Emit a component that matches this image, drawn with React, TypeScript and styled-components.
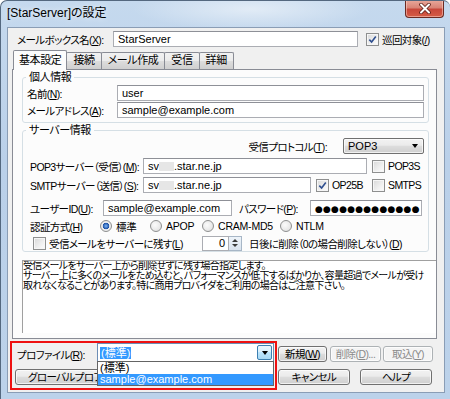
import React from 'react';
import styled, { createGlobalStyle } from 'styled-components';

const GlobalStyle = createGlobalStyle`
  html, body { margin: 0; padding: 0; background: #ffffff; }
  body {
    font-family: "Liberation Sans", "Noto Sans CJK JP", sans-serif;
    font-size: 10.5px;
    letter-spacing: -0.6px;
    font-feature-settings: "palt";
    color: #000;
  }
  *, *::before, *::after { box-sizing: border-box; }
`;

const Window = styled.div`
  width: 450px;
  height: 399px;
  display: flex;
  flex-direction: column;
  border-top: 1px solid #54687f;
  border-left: 1px solid #54687f;
  border-radius: 7px 7px 0 0;
  overflow: hidden;
  background:
    radial-gradient(ellipse 170px 30px at 250px 8px, rgba(255,255,255,0.5), rgba(255,255,255,0) 70%),
    linear-gradient(180deg, #c5d9ee 0%, #bad0e9 40%, #bcd2ea 100%);
`;

const TitleBar = styled.div`
  height: 26px;
  flex: none;
  display: flex;
  align-items: flex-start;
  justify-content: space-between;
  padding-left: 6px;
`;

const Title = styled.div`
  font-size: 12px;
  letter-spacing: 0;
  line-height: 24px;
  color: #000;
  text-shadow: 0 0 6px rgba(255,255,255,0.9);
`;

const CloseButton = styled.div`
  width: 39px;
  height: 18px;
  margin: -1px 6px 0 0;
  border: 1px solid #6b2a22;
  border-top: none;
  border-radius: 0 0 4px 4px;
  background: linear-gradient(180deg, #e9a99c 0%, #d98476 45%, #c8473a 55%, #d55c45 100%);
  box-shadow: inset 0 0 0 1px rgba(255,220,210,0.5);
  display: flex;
  align-items: center;
  justify-content: center;
`;

const Client = styled.div`
  flex: 1;
  margin: 0 5px 6px 6px;
  border: 1px solid #8a9db5;
  background: #f0f0f0;
  position: relative;
  display: flex;
  flex-direction: column;
`;

const Row = styled.div<{ $mt?: number; $pl?: number; $end?: boolean }>`
  display: flex;
  align-items: center;
  height: 16px;
  flex: none;
  margin-top: ${p => p.$mt ?? 0}px;
  padding-left: ${p => p.$pl ?? 0}px;
  justify-content: ${p => (p.$end ? 'flex-end' : 'flex-start')};
  white-space: nowrap;
`;

const Label = styled.span<{ $w?: number; $ml?: number }>`
  flex: none;
  width: ${p => (p.$w ? `${p.$w}px` : 'auto')};
  margin-left: ${p => p.$ml ?? 0}px;
  white-space: nowrap;
`;

const TextBox = styled.div<{ $w?: number }>`
  ${p => (p.$w ? `width: ${p.$w}px; flex: none;` : 'flex: 1;')}
  height: 16px;
  border: 1px solid #abadb3;
  border-top-color: #8e9097;
  background: #fff;
  padding: 0 4px;
  font-size: 11px;
  letter-spacing: 0;
  line-height: 14px;
  overflow: hidden;
  white-space: nowrap;
`;

const Masked = styled.span`
  display: inline-block;
  width: 15px;
  height: 9px;
  vertical-align: -1px;
  background: #e6e6e6;
  filter: blur(0.6px);
`;

const Dots = styled.span`
  font-family: "DejaVu Sans", sans-serif;
  font-size: 9px;
  letter-spacing: 0.2px;
`;

const CheckLabel = styled.span<{ $ml?: number; $w?: number }>`
  display: inline-flex;
  align-items: center;
  gap: 3px;
  flex: none;
  margin-left: ${p => p.$ml ?? 0}px;
  width: ${p => (p.$w ? `${p.$w}px` : 'auto')};
  white-space: nowrap;
`;

const Box = styled.span`
  width: 13px;
  height: 13px;
  flex: none;
  border: 1px solid #8e8f8f;
  background: linear-gradient(135deg, #d8d8d8 0%, #f0f0f0 60%, #fdfdfd 100%);
  box-shadow: inset 0 0 0 1px #f6f6f6;
  display: flex;
  align-items: center;
  justify-content: center;
`;

const RadioItem = styled.span<{ $w?: number }>`
  display: inline-flex;
  align-items: center;
  gap: 4px;
  flex: none;
  width: ${p => (p.$w ? `${p.$w}px` : 'auto')};
  letter-spacing: -0.2px;
`;

const RadioDot = styled.span<{ $on?: boolean }>`
  width: 12px;
  height: 12px;
  flex: none;
  border-radius: 50%;
  border: 1px solid #8e8f8f;
  background: ${p =>
    p.$on
      ? 'radial-gradient(circle at 50% 50%, #7fb4ef 0, #2a62b8 2.5px, #1d4f9c 3px, #f2f2f2 3.6px, #dadada 100%)'
      : 'radial-gradient(circle at 40% 40%, #fbfbfb 0, #e9e9e9 60%, #d4d4d4 100%)'};
`;

const Select = styled.div`
  width: 81px;
  height: 16px;
  margin-left: 16px;
  border: 1px solid #707070;
  border-radius: 2px;
  background: linear-gradient(180deg, #f2f2f2 0%, #ebebeb 45%, #dddddd 50%, #cfcfcf 100%);
  box-shadow: inset 0 0 0 1px rgba(255,255,255,0.7);
  display: flex;
  align-items: center;
  justify-content: space-between;
  padding: 0 5px 0 4px;
  font-size: 11px;
  letter-spacing: 0;
  line-height: 14px;
`;

const Arrow = styled.span`
  width: 0;
  height: 0;
  border-left: 3.5px solid transparent;
  border-right: 3.5px solid transparent;
  border-top: 4px solid #000;
`;

const TabStrip = styled.div`
  display: flex;
  align-items: flex-end;
  height: 20px;
  margin-top: 3px;
  margin-bottom: -1px;
  padding-left: 5px;
  position: relative;
  z-index: 1;
  flex: none;
`;

const Tab = styled.div<{ $active?: boolean }>`
  flex: none;
  border: 1px solid #898c95;
  border-bottom: none;
  border-radius: 2px 2px 0 0;
  white-space: nowrap;
  font-size: 11px;
  letter-spacing: -0.4px;
  ${p =>
    p.$active
      ? `
    height: 20px;
    padding: 0 5px;
    line-height: 18px;
    background: #fcfcfc;
    `
      : `
    height: 17px;
    margin-bottom: 1px;
    margin-left: -1px;
    padding: 0 6px;
    line-height: 15px;
    background: linear-gradient(180deg, #f2f2f2 0%, #ebebeb 50%, #dddddd 50%, #cfcfcf 100%);
    `}
`;

const TabPanel = styled.div`
  height: 270px;
  flex: none;
  margin: 0 7px 0 4px;
  border: 1px solid #898c95;
  background: #fcfcfc;
  padding-left: 9px;
  display: flex;
  flex-direction: column;
`;

const Group = styled.fieldset<{ $pb?: number }>`
  margin: 0 7px 0 0;
  padding: 1px 4px ${p => p.$pb ?? 0}px 4px;
  border: 1px solid #d5dfe5;
  border-radius: 3px;
  min-width: 0;
`;

const Legend = styled.legend`
  padding: 0 3px;
  margin-left: -1px;
  line-height: 14px;
  font-size: 11px;
  letter-spacing: -0.4px;
`;

const SpinBox = styled.div`
  display: flex;
  height: 15px;
  flex: none;
`;

const SpinField = styled.div`
  width: 27px;
  border: 1px solid #abadb3;
  background: #fff;
  text-align: right;
  padding-right: 3px;
  font-size: 11px;
  letter-spacing: 0;
  line-height: 13px;
`;

const SpinButtons = styled.div`
  width: 13px;
  border: 1px solid #a7b6c6;
  border-left: none;
  background: linear-gradient(180deg, #eef4fa, #d9e3ee);
  display: flex;
  flex-direction: column;
  align-items: center;
  justify-content: space-around;
  padding: 1px 0;
`;

const SpinArrow = styled.span<{ $up?: boolean }>`
  width: 0;
  height: 0;
  border-left: 3px solid transparent;
  border-right: 3px solid transparent;
  ${p => (p.$up ? 'border-bottom: 3px solid #3a3a3a;' : 'border-top: 3px solid #3a3a3a;')}
`;

const Description = styled.div`
  margin-top: 8px;
  height: 73px;
  flex: none;
  border-top: 1px solid #a0a0a0;
  border-left: 1px solid #a0a0a0;
  background: #fff;
  font-size: 10px;
  line-height: 10px;
  white-space: nowrap;
  overflow: hidden;
  letter-spacing: -0.7px;
`;

const Combo = styled.div`
  position: relative;
  width: 177px;
  height: 19px;
  flex: none;
  align-self: flex-start;
  margin-top: -3px;
  border: 1px solid #6c8db5;
  background: #fff;
  display: flex;
  align-items: center;
  padding: 0 1px 0 2px;
  font-size: 11px;
  letter-spacing: 0;
`;

const Selected = styled.span`
  background: #3399ff;
  color: #fff;
  line-height: 12px;
  padding: 0 1px;
`;

const ComboButton = styled.span`
  margin-left: auto;
  width: 15px;
  height: 15px;
  border: 1px solid #3c7fb1;
  border-radius: 2px;
  background: linear-gradient(180deg, #eaf6fd 0%, #d9f0fc 45%, #bee6fd 50%, #a7d9f5 100%);
  display: flex;
  align-items: center;
  justify-content: center;
`;

const DropList = styled.div`
  position: absolute;
  top: 17px;
  left: -1px;
  right: -1px;
  background: #fff;
  border: 1px solid #646464;
  z-index: 5;
  display: flex;
  flex-direction: column;
`;

const DropItem = styled.div<{ $hl?: boolean }>`
  height: ${p => (p.$hl ? 11 : 12)}px;
  line-height: ${p => (p.$hl ? 11 : 12)}px;
  padding-left: 2px;
  background: ${p => (p.$hl ? '#3399ff' : '#fff')};
  color: ${p => (p.$hl ? '#fff' : '#000')};
`;

const Button = styled.div<{ $w: number; $ml?: number; $disabled?: boolean; $left?: boolean }>`
  width: ${p => p.$w}px;
  height: 16px;
  flex: none;
  margin-left: ${p => p.$ml ?? 0}px;
  border: 1px solid ${p => (p.$disabled ? '#adb2b5' : '#707070')};
  border-radius: 3px;
  background: ${p =>
    p.$disabled
      ? '#f4f4f4'
      : 'linear-gradient(180deg, #f2f2f2 0%, #ebebeb 45%, #dddddd 50%, #cfcfcf 100%)'};
  box-shadow: inset 0 0 0 1px rgba(255,255,255,0.7);
  color: ${p => (p.$disabled ? '#8a8a8a' : '#000')};
  display: flex;
  align-items: center;
  justify-content: ${p => (p.$left ? 'flex-start' : 'center')};
  padding-left: ${p => (p.$left ? 12 : 0)}px;
  line-height: 14px;
  white-space: nowrap;
  overflow: hidden;
`;

const Highlight = styled.div`
  position: absolute;
  left: 2px;
  top: 313px;
  width: 267px;
  height: 49px;
  border: 2px solid #ee1111;
  z-index: 10;
  pointer-events: none;
`;

const Check: React.FC<{ checked?: boolean; text: React.ReactNode; ml?: number; w?: number }> = ({ checked, text, ml, w }) => (
  <CheckLabel $ml={ml} $w={w}>
    <Box>
      {checked && (
        <svg width="9" height="9" viewBox="0 0 9 9">
          <path d="M1.3 4.6 L3.6 7 L7.8 1.4" fill="none" stroke="#2f4f8f" strokeWidth="1.6" />
        </svg>
      )}
    </Box>
    <span>{text}</span>
  </CheckLabel>
);

const App: React.FC = () => (
  <>
    <GlobalStyle />
    <Window>
      <TitleBar>
        <Title>[StarServer]の設定</Title>
        <CloseButton>
          <svg width="14" height="11" viewBox="0 0 14 11">
            <path d="M3 1.5 L11 9.5 M11 1.5 L3 9.5" stroke="#5a1d16" strokeWidth="3.6" strokeLinecap="round" />
            <path d="M3 1.5 L11 9.5 M11 1.5 L3 9.5" stroke="#ffffff" strokeWidth="2" strokeLinecap="round" />
          </svg>
        </CloseButton>
      </TitleBar>
      <Client>
        <Row $mt={3} $pl={9}>
          <Label $w={96}>メールボックス名(<u>X</u>):</Label>
          <TextBox $w={245}>StarServer</TextBox>
          <Check checked ml={8} text={<>巡回対象(<u>/</u>)</>} />
        </Row>

        <TabStrip>
          <Tab $active>基本設定</Tab>
          <Tab>接続</Tab>
          <Tab>メール作成</Tab>
          <Tab>受信</Tab>
          <Tab>詳細</Tab>
        </TabStrip>
        <TabPanel>
          <Group $pb={4}>
            <Legend>個人情報</Legend>
            <Row>
              <Label $w={90}>名前(<u>N</u>):</Label>
              <TextBox>user</TextBox>
            </Row>
            <Row $mt={1}>
              <Label $w={90}>メールアドレス(<u>A</u>):</Label>
              <TextBox>sample@example.com</TextBox>
            </Row>
          </Group>

          <Group $pb={0}>
            <Legend>サーバー情報</Legend>
            <Row $end>
              <Label>受信プロトコル(<u>T</u>):</Label>
              <Select>
                <span>POP3</span>
                <Arrow />
              </Select>
            </Row>
            <Row $mt={4} $pl={3}>
              <Label $w={113}>POP3サーバー（受信）(<u>M</u>):</Label>
              <TextBox $w={224}>sv<Masked />.star.ne.jp</TextBox>
              <Check ml={5} text="POP3S" />
            </Row>
            <Row $mt={3} $pl={3}>
              <Label $w={113}>SMTPサーバー（送信）(<u>S</u>):</Label>
              <TextBox $w={168}>sv<Masked />.star.ne.jp</TextBox>
              <Check checked ml={5} w={56} text="OP25B" />
              <Check text="SMTPS" />
            </Row>
            <Row $mt={7} $pl={3}>
              <Label $w={73}>ユーザーID(<u>U</u>):</Label>
              <TextBox $w={129}>sample@example.com</TextBox>
              <Label $w={71} $ml={7}>パスワード(<u>P</u>):</Label>
              <TextBox $w={112}>
                <Dots>●●●●●●●●●●●●●</Dots>
              </TextBox>
            </Row>
            <Row $mt={2} $pl={3}>
              <Label $w={70}>認証方式(<u>H</u>)</Label>
              <RadioItem $w={50}>
                <RadioDot $on />
                標準
              </RadioItem>
              <RadioItem $w={52}>
                <RadioDot />
                APOP
              </RadioItem>
              <RadioItem $w={78}>
                <RadioDot />
                CRAM-MD5
              </RadioItem>
              <RadioItem>
                <RadioDot />
                NTLM
              </RadioItem>
            </Row>
            <Row $mt={1} $pl={6}>
              <Check w={169} text={<>受信メールをサーバーに残す(<u>L</u>)</>} />
              <SpinBox>
                <SpinField>0</SpinField>
                <SpinButtons>
                  <SpinArrow $up />
                  <SpinArrow />
                </SpinButtons>
              </SpinBox>
              <Label $ml={7}>日後に削除（0の場合削除しない）(<u>D</u>)</Label>
            </Row>
          </Group>

          <Description>
            受信メールをサーバー上から削除せずに残す場合指定します。
            <br />
            サーバー上に多くのメールをため込むと、パフォーマンスが低下するばかりか、容量超過でメールが受け
            <br />
            取れなくなることがあります。特に商用プロバイダをご利用の場合はご注意下さい。
          </Description>
        </TabPanel>

        <Row $mt={7} $pl={9}>
          <Label $w={80}>プロファイル(<u>R</u>):</Label>
          <Combo>
            <Selected>(標準)</Selected>
            <ComboButton>
              <Arrow />
            </ComboButton>
            <DropList>
              <DropItem>(標準)</DropItem>
              <DropItem $hl>sample@example.com</DropItem>
            </DropList>
          </Combo>
          <Button $w={49} $ml={4}>新規(<u>W</u>)</Button>
          <Button $w={51} $ml={3} $disabled>削除(<u>D</u>)...</Button>
          <Button $w={50} $ml={2} $disabled>取込(<u>Y</u>)</Button>
        </Row>
        <Row $mt={7} $pl={7}>
          <Button $w={150} $left>グローバルプロファイル(<u>G</u>)...</Button>
          <Button $w={72} $ml={113}>キャンセル</Button>
          <Button $w={72} $ml={10}>ヘルプ</Button>
        </Row>

        <Highlight />
      </Client>
    </Window>
  </>
);

export default App;
